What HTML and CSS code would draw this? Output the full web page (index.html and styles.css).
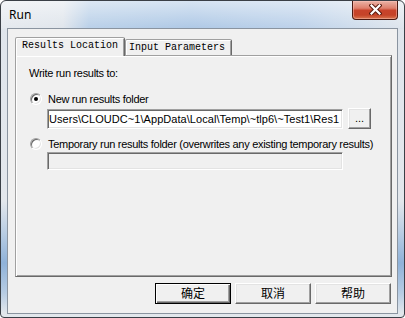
FILE: index.html
```html
<!DOCTYPE html>
<html>
<head>
<meta charset="utf-8">
<link rel="stylesheet" href="styles.css">
</head>
<body>
<div class="window">
  <div class="titlebar">
    <span class="title">Run</span>
    <div class="close">
      <svg width="13" height="11" viewBox="0 0 13 11">
        <path d="M2.5 1.5 L10.5 9.5 M10.5 1.5 L2.5 9.5" stroke="#5a1a0e" stroke-width="4.2" stroke-linecap="square" fill="none"/>
        <path d="M2.5 1.5 L10.5 9.5 M10.5 1.5 L2.5 9.5" stroke="#ffffff" stroke-width="2.2" stroke-linecap="square" fill="none"/>
      </svg>
    </div>
  </div>
  <div class="client">
    <div class="tabs">
      <div class="tab active">Results Location</div>
      <div class="tab">Input Parameters</div>
    </div>
    <div class="panel">
      <div class="caption">Write run results to:</div>
      <div class="option first"><span class="radio checked"></span><span class="label">New run results folder</span></div>
      <div class="path-row">
        <div class="field"><span class="path">Users\CLOUDC~1\AppData\Local\Temp\~tlp6\~Test1\Res1</span></div>
        <div class="browse">...</div>
      </div>
      <div class="option second"><span class="radio"></span><span class="label">Temporary run results folder (overwrites any existing temporary results)</span></div>
      <div class="field disabled"></div>
    </div>
    <div class="buttons">
      <div class="btn default">确定</div>
      <div class="btn">取消</div>
      <div class="btn">帮助</div>
    </div>
  </div>
</div>
</body>
</html>
```
FILE: styles.css
```css
html, body {
  margin: 0;
  padding: 0;
  background: #ffffff;
}
body {
  width: 405px;
  height: 318px;
  overflow: hidden;
  font-family: "Liberation Sans", Arial, sans-serif;
  font-size: 11px;
  color: #000;
}
.window {
  box-sizing: border-box;
  width: 405px;
  height: 318px;
  border: 1px solid #3a3f46;
  border-radius: 6px 6px 4px 4px;
  padding: 0 6px 3px 6px;
  display: flex;
  flex-direction: column;
  background:
    linear-gradient(180deg, rgba(255,255,255,0.55) 0px, rgba(255,255,255,0.1) 27px, rgba(255,255,255,0) 28px),
    linear-gradient(90deg, #e2e7ed 0px, #dde3ea 62px, #b2cbe6 88px, #a6c3e3 190px, #b6cde8 300px, #c8d8ea 350px, #dce3eb 405px) top / 100% 28px no-repeat,
    linear-gradient(180deg, #dfe5ec 0px, #e3e7ec 200px, #b9cde3 232px, #8fb2d9 262px, #b7cce3 292px, #e2e7ec 312px);
}
.titlebar {
  height: 27px;
  display: flex;
  justify-content: space-between;
  align-items: flex-start;
  flex: none;
}
.title {
  font-family: "Noto Sans", "Open Sans", sans-serif;
  font-size: 12px;
  line-height: 16px;
  padding: 6px 0 0 2px;
  color: #000;
}
.close {
  box-sizing: border-box;
  width: 46px;
  height: 19px;
  border: 1px solid #4a1a12;
  border-top: none;
  border-radius: 0 0 4px 4px;
  background: linear-gradient(180deg, #eab3a6 0%, #de7f6c 40%, #c8432b 52%, #c54328 78%, #d9764f 100%);
  box-shadow: inset 0 0 0 1px rgba(255,200,190,0.45);
  display: flex;
  align-items: center;
  justify-content: center;
}
.close svg { display: block; margin-top: -1px; }
.client {
  box-sizing: border-box;
  height: 286px;
  border: 1px solid #8a94a0;
  background: #f0f0f0;
  padding: 8px 5px 9px 7px;
  display: flex;
  flex-direction: column;
}
.tabs {
  height: 18px;
  display: flex;
  align-items: flex-end;
  flex: none;
}
.tab {
  box-sizing: border-box;
  font-family: "Liberation Mono", "Courier New", monospace;
  font-size: 10px;
  line-height: 14px;
  white-space: nowrap;
  height: 16px;
  padding: 1px 6px 0 3px;
  border: 1px solid;
  border-bottom: none;
  border-color: #a0a0a0 #696969 transparent #a0a0a0;
  border-radius: 2px 2px 0 0;
  box-shadow: inset 1px 1px 0 #ffffff, inset -1px 0 0 #a0a0a0;
  background: #f0f0f0;
}
.tab.active {
  height: 19px;
  padding: 1px 6px 0 6px;
  margin-bottom: -1px;
  position: relative;
  z-index: 1;
}
.panel {
  box-sizing: border-box;
  height: 222px;
  flex: none;
  border: 1px solid;
  border-color: #a0a0a0 #696969 #696969 #a0a0a0;
  box-shadow: inset 1px 1px 0 #ffffff, inset -1px -1px 0 #a0a0a0;
  padding: 11px 10px 0 13px;
  display: flex;
  flex-direction: column;
  align-items: flex-start;
  letter-spacing: -0.3px;
}
.caption {
  line-height: 13px;
}
.option {
  display: flex;
  align-items: center;
  height: 12px;
  margin-left: 1px;
  white-space: nowrap;
}
.option.first { margin-top: 13px; }
.option.second { margin-top: 9px; }
.label { margin-left: 6px; line-height: 12px; }
.radio {
  box-sizing: border-box;
  width: 12px;
  height: 12px;
  border-radius: 50%;
  border: 1px solid;
  border-color: #a0a0a0 #ffffff #ffffff #a0a0a0;
  box-shadow: inset 1px 1px 0 #696969, inset -1px -1px 0 #e3e3e3;
  background: #ffffff;
  display: flex;
  align-items: center;
  justify-content: center;
  flex: none;
}
.radio.checked::after {
  content: "";
  width: 4px;
  height: 4px;
  border-radius: 50%;
  background: #000;
}
.path-row {
  display: flex;
  align-items: flex-end;
  gap: 5px;
  margin-top: 3px;
  margin-left: 18px;
  height: 21px;
}
.field {
  box-sizing: border-box;
  width: 296px;
  height: 20px;
  border: 1px solid;
  border-color: #a0a0a0 #ffffff #ffffff #a0a0a0;
  box-shadow: inset 1px 1px 0 #696969, inset -1px -1px 0 #e3e3e3;
  background: #ffffff;
  display: flex;
  justify-content: flex-start;
  align-items: center;
  padding: 0 1px 0 1px;
}
.path {
  white-space: nowrap;
  letter-spacing: 0.05px;
  line-height: 14px;
}
.field.disabled {
  height: 18px;
  margin-top: 2px;
  margin-left: 18px;
  background: #f0f0f0;
}
.browse {
  box-sizing: border-box;
  width: 23px;
  height: 21px;
  border: 1px solid;
  border-color: #ffffff #696969 #696969 #ffffff;
  box-shadow: inset -1px -1px 0 #a0a0a0, inset 1px 1px 0 #e3e3e3;
  background: #f0f0f0;
  display: flex;
  align-items: center;
  justify-content: center;
  letter-spacing: 0;
  line-height: 12px;
  padding-bottom: 2px;
}
.buttons {
  display: flex;
  justify-content: flex-end;
  gap: 4px;
  margin-top: 6px;
  margin-right: 1px;
  height: 21px;
  flex: none;
}
.btn {
  box-sizing: border-box;
  width: 76px;
  height: 21px;
  border: 1px solid;
  border-color: #ffffff #696969 #696969 #ffffff;
  box-shadow: inset -1px -1px 0 #a0a0a0, inset 1px 1px 0 #e3e3e3;
  background: #f0f0f0;
  font-family: "Noto Sans CJK SC", "Noto Sans", sans-serif;
  font-size: 12px;
  line-height: 17px;
  text-align: center;
}
.btn.default {
  border-color: #000000;
  box-shadow: inset 1px 1px 0 #ffffff, inset -1px -1px 0 #696969, inset -2px -2px 0 #a0a0a0;
}
```
